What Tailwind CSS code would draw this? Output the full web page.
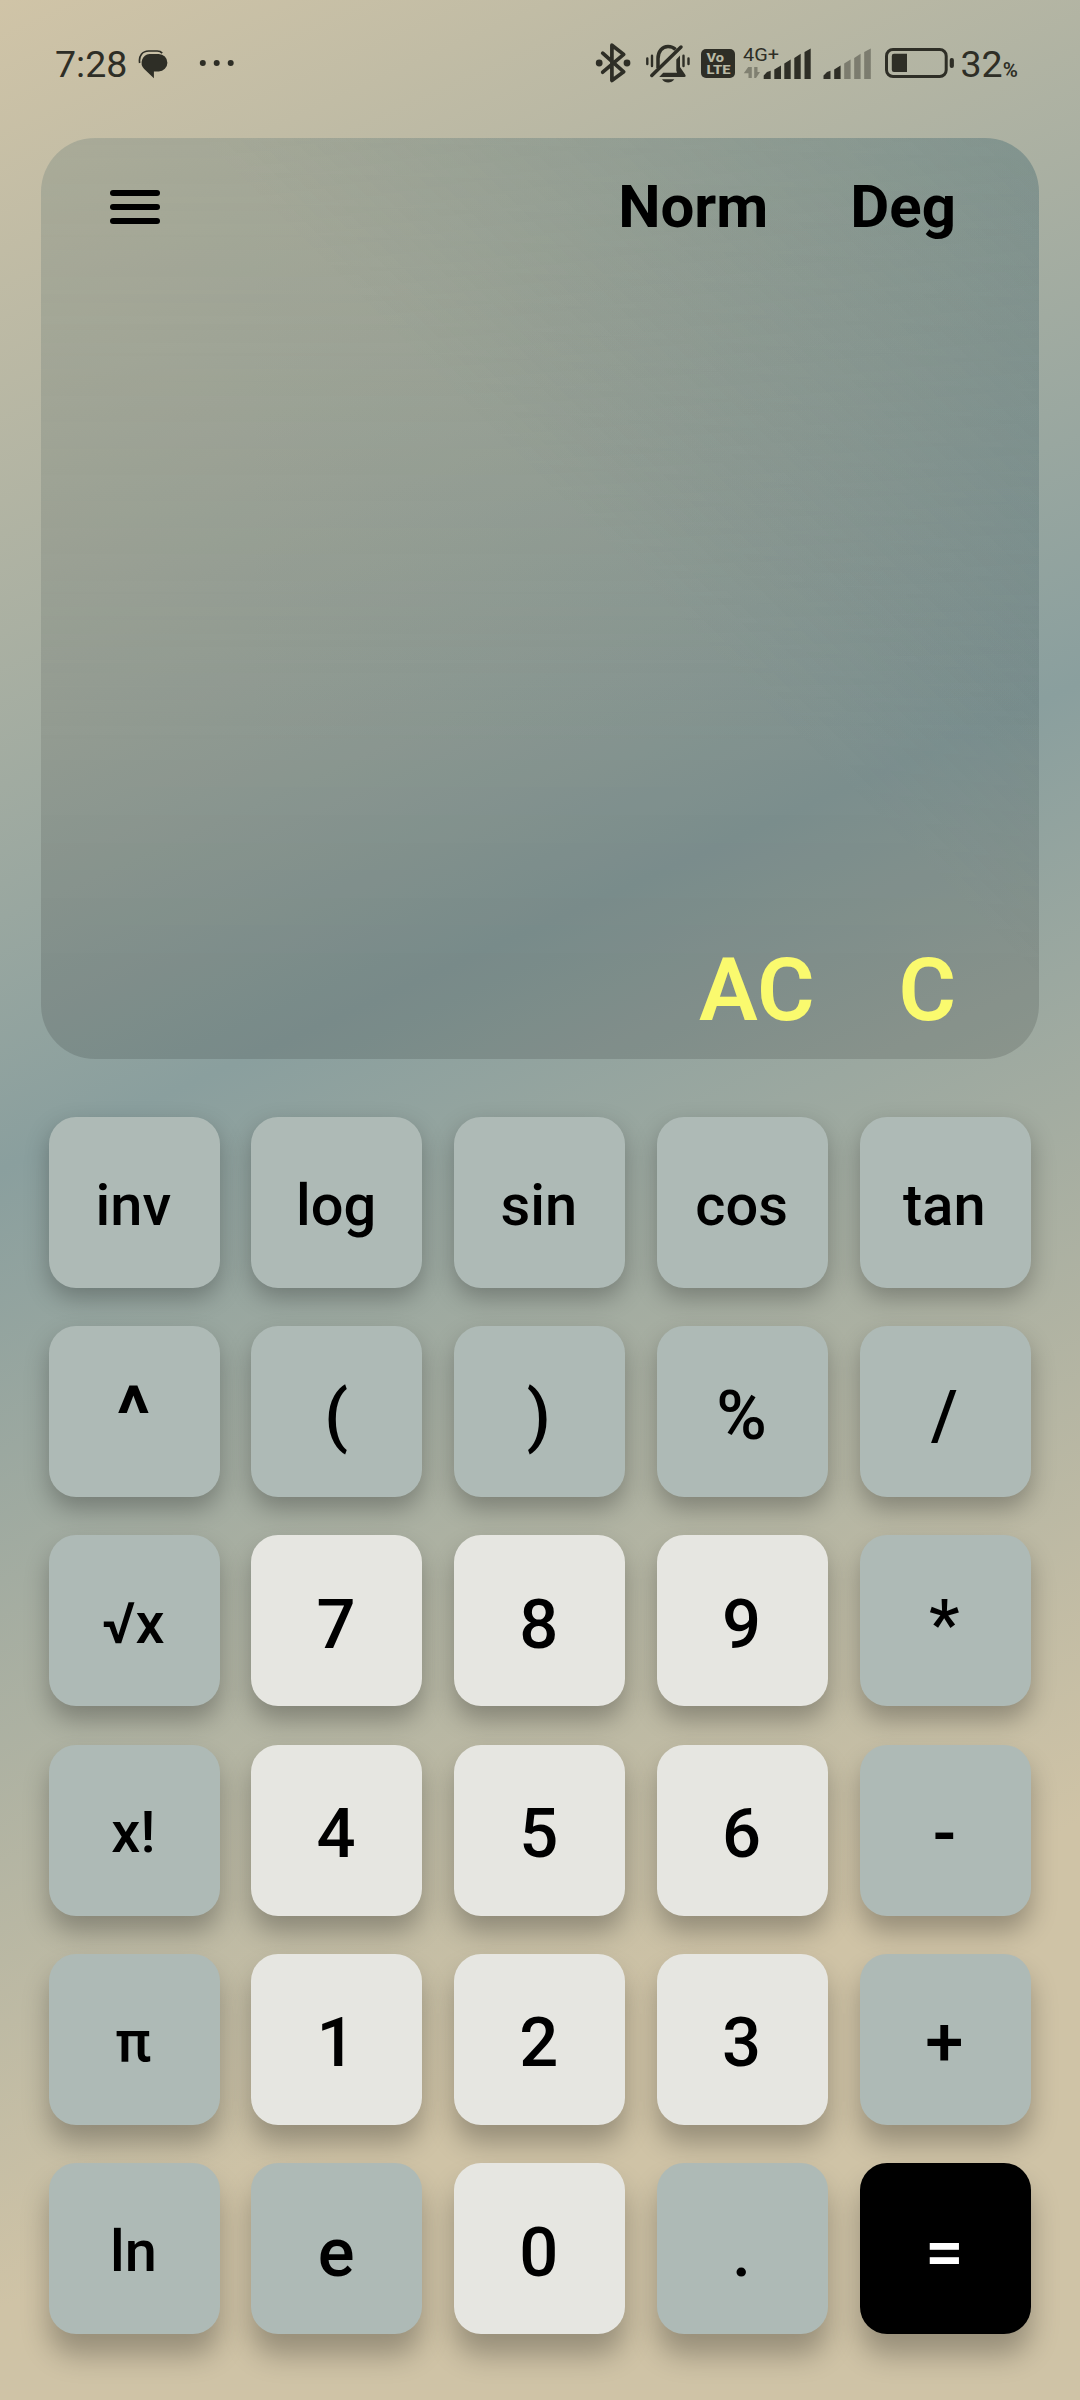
<!DOCTYPE html>
<html lang="en">
<head>
<meta charset="utf-8">
<title>Calculator</title>
<script src="https://cdn.jsdelivr.net/npm/@tailwindcss/browser@4"></script>
</head>
<body class="w-[1080px] h-[2400px] overflow-hidden font-['Roboto',sans-serif] text-black bg-[linear-gradient(155.77deg,#d0c4a7_0%,#8a9f9e_40.5%,#cfc3a6_80%)]">

<!-- Status bar -->
<div class="h-[126px] flex items-center text-[#2e2e26]">
  <span class="ml-[55px] w-[83px] pt-[3px] text-[37.5px] leading-none font-[450] whitespace-nowrap">7:28</span>
  <svg class="w-[30px] h-[60px] shrink-0" viewBox="138 33 30 60" fill="currentColor">
    <path d="M149.500 54h9.200a8.700 8.700 0 0 1 0 17.400h-4.800v6.800l-9.700-9.200a8.800 8.800 0 0 1 5.300-15z"/>
    <path d="M139.700 63c-1.300-7.500 3-12 9-12h8.500c2.200 0 3.800.700 5 2.100" fill="none" stroke="currentColor" stroke-width="1.700"/>
  </svg>
  <svg class="w-[36px] h-[60px] shrink-0 ml-[31px]" viewBox="199 33 36 60" fill="currentColor">
    <circle cx="202.800" cy="63" r="3"/><circle cx="216.700" cy="63" r="3"/><circle cx="230.700" cy="63" r="3"/>
  </svg>

  <svg class="w-[36px] h-[60px] shrink-0 ml-[360px]" viewBox="595 33 36 60" fill="none" stroke="currentColor" stroke-width="3.700" stroke-linejoin="round" stroke-linecap="round">
    <path d="M602.700 53.200 623.700 71.800 611.900 80.500V45.200L623.700 54.400 602.700 72.200"/>
    <circle cx="599.200" cy="63" r="3.400" fill="currentColor" stroke="none"/><circle cx="627" cy="63" r="3.400" fill="currentColor" stroke="none"/>
  </svg>
  <svg class="w-[46px] h-[60px] shrink-0 ml-[14px]" viewBox="645 33 46 60" fill="none" stroke="currentColor" stroke-width="3.500" stroke-linecap="round">
    <path d="M651.800 75.500 681 47"/>
    <path d="M658 68V58.500c0-7 4.200-12 10-12 3 0 5.600 1 7.600 3" stroke-linecap="butt"/>
    <path d="M676.300 59.500 680 55.500V67l5.300 7.700c.8 1.300.2 2.300-1 2.300H659.200l4-4.200H677l-.7-2.300z" fill="currentColor" stroke="none"/>
    <path d="M662 79.200h12.300c-1.600 2.200-3.700 3.300-6.200 3.300s-4.500-1.100-6.100-3.300z" fill="currentColor" stroke="none"/>
    <path d="M647.300 58.500v5.500M652 55.800v10.200M683.500 55.800v10.200M688.500 58.500v5.500" stroke-width="2.400"/>
  </svg>
  <svg class="w-[34px] h-[60px] shrink-0 ml-[10px]" viewBox="701 33 34 60">
    <rect x="701" y="49" width="34" height="29" rx="5" fill="currentColor"/>
    <text x="706.500" y="61.700" font-size="12" font-weight="800" fill="#babaa5" textLength="17.500" lengthAdjust="spacingAndGlyphs">Vo</text>
    <text x="706.500" y="74.300" font-size="12.500" font-weight="800" fill="#babaa5" textLength="24" lengthAdjust="spacingAndGlyphs">LTE</text>
  </svg>
  <svg class="w-[70px] h-[60px] shrink-0 ml-[7px]" viewBox="742 33 70 60" fill="currentColor">
    <text x="743" y="61" font-size="18.700" textLength="36" lengthAdjust="spacingAndGlyphs">4G+</text>
    <path d="M743.800 73.300 748.200 67h.8v0h2.800v11h-3.300v-4.700zM754.200 67h3.300v5h2.500l-4 6h-1.800z" fill-opacity=".4"/>
    <path d="M763.700 75.500 767 72l3.700-1.300V79h-7zM774.300 69.500l6.700-4V79h-6.700zM784.300 63.500l6.400-4V79h-6.400zM794.300 58l6.400-4.300V79h-6.400zM804.500 52l6.200-3.500V79h-6.200z"/>
  </svg>
  <svg class="w-[48px] h-[60px] shrink-0 ml-[11px]" viewBox="823 33 48 60" fill="currentColor">
    <path d="M823.500 75.500 827 72l3.500-1.300V79h-7zM834.200 69.500l6.400-4V79h-6.400z"/>
    <path d="M844.200 63.500l6.400-4V79h-6.400zM854.200 58l6.400-4.300V79h-6.400zM864.200 52l6.600-3.500V79h-6.600z" fill-opacity=".42"/>
  </svg>
  <svg class="w-[70px] h-[60px] shrink-0 ml-[14px]" viewBox="885 33 70 60" fill="currentColor">
    <rect x="886.500" y="49.500" width="59.700" height="27" rx="6.500" fill="none" stroke="currentColor" stroke-width="3"/>
    <path d="M894 53.700h13v18.300h-13a2.200 2.200 0 0 1-2.200-2.200V56a2.200 2.200 0 0 1 2.200-2.300z"/>
    <rect x="949.700" y="58" width="4.200" height="10" rx="2"/>
  </svg>
  <span class="ml-[5.5px] pt-[3px] text-[37.5px] leading-none font-[450] whitespace-nowrap">32<span class="text-[20.5px] font-semibold">%</span></span>
</div>

<!-- Display -->
<div class="mt-[12px] mx-[41px] h-[921px] rounded-[54px] flex flex-col justify-between bg-[linear-gradient(180deg,rgba(0,0,0,.01)_0%,rgba(0,0,0,.13)_90%),linear-gradient(180deg,rgba(50,90,100,.18)_0%,rgba(50,90,100,0)_66%),linear-gradient(225deg,rgba(50,100,115,.19)_0%,rgba(50,100,115,0)_44%)]">
  <div class="flex items-center h-[138px] pl-[69px] pr-[83px]">
    <div class="flex flex-col gap-[8px]">
      <div class="w-[50px] h-[6px] rounded-full bg-black"></div>
      <div class="w-[50px] h-[6px] rounded-full bg-black"></div>
      <div class="w-[50px] h-[6px] rounded-full bg-black"></div>
    </div>
    <div class="ml-auto flex gap-[82px] text-[60px] leading-none font-bold">
      <span>Norm</span><span>Deg</span>
    </div>
  </div>
  <div class="flex justify-end gap-[84px] pr-[83px] pb-[25px] text-[88px] leading-none font-semibold text-[#fafa6e]">
    <span>AC</span><span>C</span>
  </div>
</div>

<!-- Keypad -->
<div id="pad" class="mt-[58px] ml-[48.6px] grid grid-cols-[repeat(5,171px)] grid-rows-[repeat(6,171px)] gap-x-[31.75px] gap-y-[38.2px] font-medium leading-none"></div>

<script>
const rows = [
  ['inv','log','sin','cos','tan'],
  ['^','(',')','%','/'],
  ['√x','7','8','9','*'],
  ['x!','4','5','6','-'],
  ['π','1','2','3','+'],
  ['ln','e','0','.','=']
];
// The drop shadow falls further the lower a row sits
const shadows = [
  'shadow-[0_10px_24px_rgba(0,0,0,.27)]',
  'shadow-[0_12px_24px_rgba(0,0,0,.27)]',
  'shadow-[0_14px_25px_rgba(0,0,0,.27)]',
  'shadow-[0_16px_26px_rgba(0,0,0,.27)]',
  'shadow-[0_18px_27px_rgba(0,0,0,.27)]',
  'shadow-[0_21px_28px_rgba(0,0,0,.27)]'
];
const small = ['inv','log','sin','cos','tan','√x','x!','π','ln'];
const pad = document.getElementById('pad');
rows.forEach((row, r) => row.forEach(label => {
  const key = document.createElement('button');
  const tone = label === '=' ? 'bg-black text-white' : /^\d$/.test(label) ? 'bg-[#e6e6e1]' : 'bg-[#aebab6]';
  const size = label === '^' ? 'text-[77px] font-bold pt-[7px]'
    : small.includes(label) ? 'text-[57.75px] pt-[6px]' : 'text-[68.75px] pt-[9px]';
  key.className = 'flex items-center justify-center rounded-[27px] pr-[1.5px] ' + tone + ' ' + size + ' ' + shadows[r];
  key.textContent = label;
  pad.appendChild(key);
}));
</script>
</body>
</html>
